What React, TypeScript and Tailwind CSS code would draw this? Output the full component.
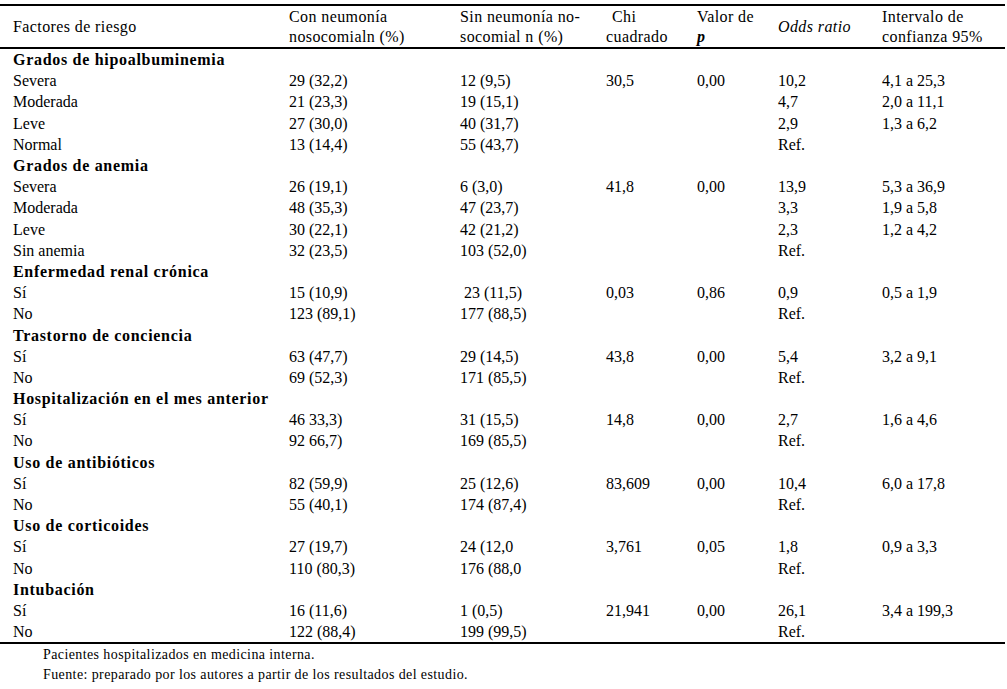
import React from "react";

type Row = { label: string; bold?: boolean; c: string[] };

const rows: Row[] = [
  { label: "Grados de hipoalbuminemia", bold: true, c: [] },
  { label: "Severa", c: ["29 (32,2)", "12 (9,5)", "30,5", "0,00", "10,2", "4,1 a 25,3"] },
  { label: "Moderada", c: ["21 (23,3)", "19 (15,1)", "", "", "4,7", "2,0 a 11,1"] },
  { label: "Leve", c: ["27 (30,0)", "40 (31,7)", "", "", "2,9", "1,3 a 6,2"] },
  { label: "Normal", c: ["13 (14,4)", "55 (43,7)", "", "", "Ref.", ""] },
  { label: "Grados de anemia", bold: true, c: [] },
  { label: "Severa", c: ["26 (19,1)", "6 (3,0)", "41,8", "0,00", "13,9", "5,3 a 36,9"] },
  { label: "Moderada", c: ["48 (35,3)", "47 (23,7)", "", "", "3,3", "1,9 a 5,8"] },
  { label: "Leve", c: ["30 (22,1)", "42 (21,2)", "", "", "2,3", "1,2 a 4,2"] },
  { label: "Sin anemia", c: ["32 (23,5)", "103 (52,0)", "", "", "Ref.", ""] },
  { label: "Enfermedad renal crónica", bold: true, c: [] },
  { label: "Sí", c: ["15 (10,9)", "\u00a023 (11,5)", "0,03", "0,86", "0,9", "0,5 a 1,9"] },
  { label: "No", c: ["123 (89,1)", "177 (88,5)", "", "", "Ref.", ""] },
  { label: "Trastorno de conciencia", bold: true, c: [] },
  { label: "Sí", c: ["63 (47,7)", "29 (14,5)", "43,8", "0,00", "5,4", "3,2 a 9,1"] },
  { label: "No", c: ["69 (52,3)", "171 (85,5)", "", "", "Ref.", ""] },
  { label: "Hospitalización en el mes anterior", bold: true, c: [] },
  { label: "Sí", c: ["46 33,3)", "31 (15,5)", "14,8", "0,00", "2,7", "1,6 a 4,6"] },
  { label: "No", c: ["92 66,7)", "169 (85,5)", "", "", "Ref.", ""] },
  { label: "Uso de antibióticos", bold: true, c: [] },
  { label: "Sí", c: ["82 (59,9)", "25 (12,6)", "83,609", "0,00", "10,4", "6,0 a 17,8"] },
  { label: "No", c: ["55 (40,1)", "174 (87,4)", "", "", "Ref.", ""] },
  { label: "Uso de corticoides", bold: true, c: [] },
  { label: "Sí", c: ["27 (19,7)", "24 (12,0", "3,761", "0,05", "1,8", "0,9 a 3,3"] },
  { label: "No", c: ["110 (80,3)", "176 (88,0", "", "", "Ref.", ""] },
  { label: "Intubación", bold: true, c: [] },
  { label: "Sí", c: ["16 (11,6)", "1 (0,5)", "21,941", "0,00", "26,1", "3,4 a 199,3"] },
  { label: "No", c: ["122 (88,4)", "199 (99,5)", "", "", "Ref.", ""] },
];

const grid = "grid grid-cols-[289px_171px_146px_91px_81px_104px_1fr]";

export default function App() {
  return (
    <div
      className="bg-white text-black w-[1007px] h-[689px] pt-[4px]"
      style={{ fontFamily: '"Liberation Serif", "Times New Roman", serif' }}
    >
      <div className="w-[1005px]">
        <div className={`${grid} border-t-2 border-b-2 border-black h-[45px] items-center text-[16px] leading-[20px] tracking-[0.4px]`}>
          <div className="pl-[13px]">Factores de riesgo</div>
          <div>
            Con neumonía
            <br />
            nosocomialn (%)
          </div>
          <div>
            Sin neumonía no-
            <br />
            socomial n (%)
          </div>
          <div>
            <span className="pl-[6px]">Chi</span>
            <br />
            cuadrado
          </div>
          <div>
            Valor de
            <br />
            <span className="italic font-bold">p</span>
          </div>
          <div className="italic">Odds ratio</div>
          <div>
            Intervalo de
            <br />
            confianza 95%
          </div>
        </div>
        <div className="border-b-2 border-black">
          {rows.map((r, i) => (
            <div key={i} className={`${grid} h-[21.2px] items-center text-[16px] leading-[21px]`}>
              <div className={r.bold ? "pl-[13px] font-bold tracking-[0.7px] whitespace-nowrap" : "pl-[13px]"}>
                {r.label}
              </div>
              {r.c.map((v, j) => (
                <div key={j} className="whitespace-pre">
                  {v}
                </div>
              ))}
            </div>
          ))}
        </div>
        <div className="pl-[43px] text-[14px] leading-[20px] pt-[1px] tracking-[0.4px]">
          <div>Pacientes hospitalizados en medicina interna.</div>
          <div>Fuente: preparado por los autores a partir de los resultados del estudio.</div>
        </div>
      </div>
    </div>
  );
}
